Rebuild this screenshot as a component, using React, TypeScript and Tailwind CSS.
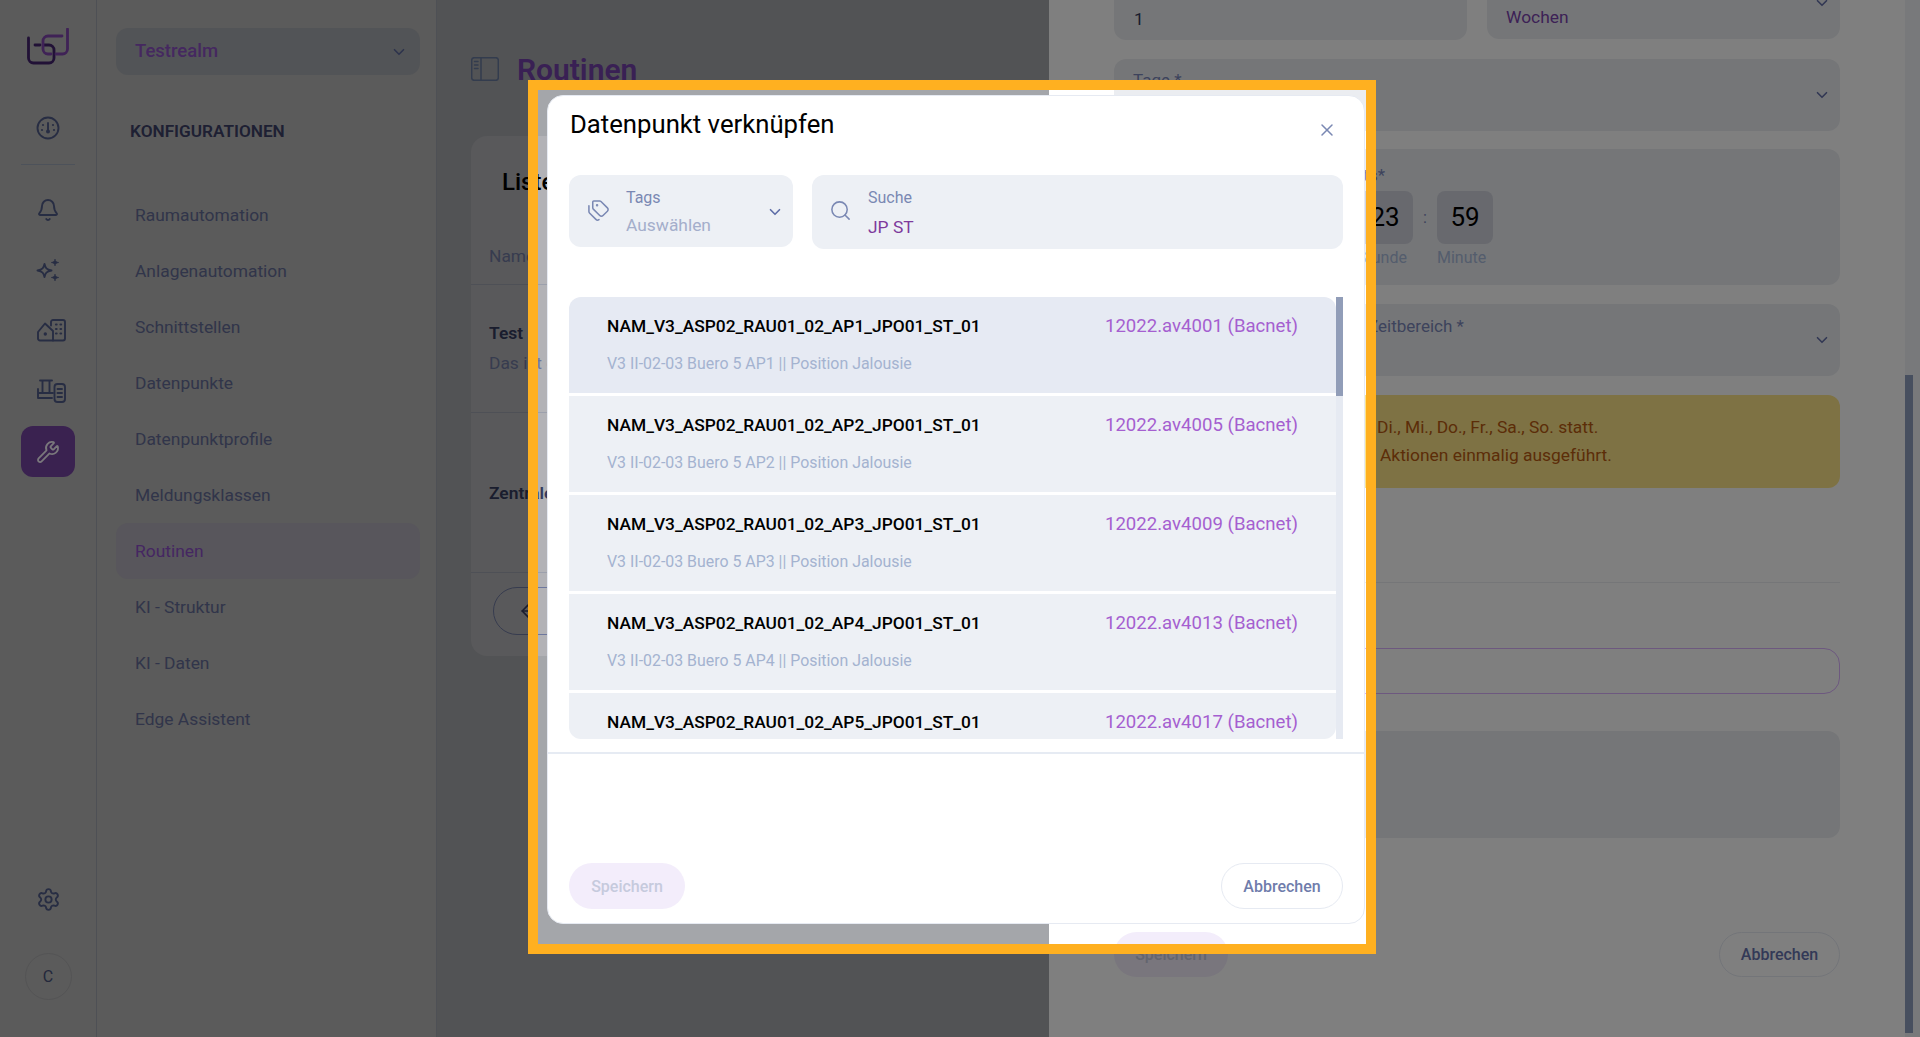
import React from 'react';
import { ArrowLeft, Bell, ChevronDown, Search, Settings, Tags, Wrench, X } from 'lucide-react';

const NAV = ['Raumautomation', 'Anlagenautomation', 'Schnittstellen', 'Datenpunkte', 'Datenpunktprofile', 'Meldungsklassen', 'Routinen', 'KI - Struktur', 'KI - Daten', 'Edge Assistent'];

const ROWS = [
  { ap: 'AP1', addr: '12022.av4001 (Bacnet)' },
  { ap: 'AP2', addr: '12022.av4005 (Bacnet)' },
  { ap: 'AP3', addr: '12022.av4009 (Bacnet)' },
  { ap: 'AP4', addr: '12022.av4013 (Bacnet)' },
  { ap: 'AP5', addr: '12022.av4017 (Bacnet)' },
];

const ICON = '#4f5a86';

const Logo = () => (
  <svg width="42" height="37" viewBox="27 28 42 37" fill="none" strokeWidth="2.8" strokeLinecap="round">
    <path d="M28.500 38V58a5 5 0 0 0 5 5H49a5 5 0 0 0 5-5V50a5 5 0 0 0-5-5H44M35 45H40" stroke="#42226c" />
    <path d="M67.500 29V49a5 5 0 0 1-5 5H56M62 36H48a5 5 0 0 0-5 5V49a5 5 0 0 0 5 5H51" stroke="#7e44ac" />
  </svg>
);

const GaugeIcon = () => (
  <svg width="24" height="24" viewBox="0 0 24 24" fill="none" stroke={ICON} strokeWidth="1.9" strokeLinecap="round">
    <circle cx="12" cy="12" r="10.500" />
    <path d="M12 14V7" />
    <circle cx="12" cy="15.500" r="2" fill={ICON} stroke="none" />
    <circle cx="7" cy="9" r="1.100" fill={ICON} stroke="none" />
    <circle cx="17" cy="9" r="1.100" fill={ICON} stroke="none" />
    <circle cx="6" cy="14" r="1.100" fill={ICON} stroke="none" />
    <circle cx="18" cy="14" r="1.100" fill={ICON} stroke="none" />
  </svg>
);

const SparkIcon = () => (
  <svg width="24" height="24" viewBox="0 0 24 24" fill="none" stroke={ICON} strokeWidth="1.900" strokeLinejoin="round">
    <path d="M8.500 6 C9.300 10 10.500 11.600 15.500 12.500 C10.500 13.400 9.300 15 8.500 19 C7.700 15 6.500 13.400 1.500 12.500 C6.500 11.600 7.700 10 8.500 6Z" />
    <path d="M19 1 C19.400 3.200 20.200 4 22.800 4.500 C20.200 5 19.400 5.800 19 8 C18.600 5.800 17.800 5 15.200 4.500 C17.800 4 18.600 3.200 19 1Z" fill={ICON} strokeWidth="0.600" />
    <path d="M19 16 C19.400 18.200 20.200 19 22.800 19.500 C20.200 20 19.400 20.800 19 23 C18.600 20.800 17.800 20 15.200 19.500 C17.800 19 18.600 18.200 19 16Z" fill={ICON} strokeWidth="0.600" />
  </svg>
);

const BuildingsIcon = () => (
  <svg width="29" height="23" viewBox="0 0 29 23" fill="none" stroke={ICON} strokeWidth="1.900" strokeLinejoin="round" strokeLinecap="round">
    <path d="M1 13L8 4.500L16 12V21.500H3a2 2 0 0 1-2-2Z" />
    <circle cx="8.300" cy="15" r="1.700" fill={ICON} stroke="none" />
    <path d="M14 6.500V3a2 2 0 0 1 2-2H26a2 2 0 0 1 2 2V19.500a2 2 0 0 1-2 2H16" />
    <path d="M19 5.500h.6M23.500 5.500h.6M19 10h.6M23.500 10h.6M19 14.500h.6M23.500 14.500h.6" strokeWidth="2.200" />
  </svg>
);

const FactoryIcon = () => (
  <svg width="29" height="24" viewBox="0 0 29 24" fill="none" stroke={ICON} strokeWidth="1.900" strokeLinecap="round" strokeLinejoin="round">
    <path d="M3 1.500H15M5.500 1.500V13.500M12.500 1.500V13.500" />
    <path d="M1 10V19H15M1 14H16" />
    <rect x="17.500" y="5" width="10.500" height="18" rx="3" />
    <path d="M20.500 10h4.500M20.500 14h4.500M20.500 18h4.500" />
  </svg>
);

const PanelIcon = () => (
  <svg width="28" height="24" viewBox="0 0 28 24" fill="none" stroke="#66789c" strokeWidth="1.500" strokeLinecap="round">
    <rect x="0.700" y="0.700" width="26.600" height="22.600" rx="2.500" />
    <path d="M10 1V23M3.500 4.500h3.500M3.500 8h3.500M3.500 11.500h3.500" />
  </svg>
);

export default function App() {
  return (
    <div className="relative flex h-screen w-screen overflow-hidden bg-[#a4a6aa] text-black [font-family:Roboto,sans-serif]">
      {/* icon rail */}
      <aside className="flex w-[97px] shrink-0 flex-col items-center border-r border-[#9da1aa] bg-[#b6b6b6] pt-[28px]">
        <Logo />
        <div className="mt-[51px]"><GaugeIcon /></div>
        <div className="mt-[24px] h-px w-[54px] bg-[#9aa4b4]" />
        <div className="mt-[15px] flex flex-col items-center">
          <div className="flex h-[60px] items-center"><Bell size={24} strokeWidth={1.9} className="text-[#4f5a86]" /></div>
          <div className="flex h-[60px] items-center"><SparkIcon /></div>
          <div className="flex h-[61px] items-center pl-[6px]"><BuildingsIcon /></div>
          <div className="flex h-[60px] items-center pl-[6px]"><FactoryIcon /></div>
          <div className="mt-[5px] flex h-[51px] w-[54px] items-center justify-center rounded-xl bg-[#7444a0]">
            <Wrench size={24} strokeWidth={1.8} className="text-[#f4f0f8]" />
          </div>
        </div>
        <Settings size={25} strokeWidth={1.8} className="mt-auto text-[#4f5a86]" />
        <div className="mb-[37px] mt-[41px] flex h-[47px] w-[47px] items-center justify-center rounded-full border border-[#a8a8aa] text-[16px] text-[#465078]">C</div>
      </aside>

      {/* config sidebar */}
      <aside className="w-[340px] shrink-0 border-r border-[#9da1aa] bg-[#b6b6b6] pl-[19px] pr-[16px] pt-[28px]">
        <div className="flex h-[47px] items-center justify-between rounded-xl bg-[#a5a9ae] pl-[19px] pr-[12px]">
          <span className="pt-[1px] text-[18.500px] font-medium text-[#8a50c0]">Testrealm</span>
          <ChevronDown size={18} strokeWidth={2.2} className="text-[#5a6698]" />
        </div>
        <div className="mt-[44px] pl-[14px] text-[17.200px] font-semibold leading-6 text-[#3c4066]">KONFIGURATIONEN</div>
        <nav className="mt-[44px] flex flex-col">
          {NAV.map((item) => (
            <div key={item} className={`flex h-[56px] items-center rounded-xl pl-[19px] text-[17.400px] ${item === 'Routinen' ? 'bg-[#b0acb8] text-[#8a4cc4]' : 'text-[#626a94]'}`}>
              {item}
            </div>
          ))}
        </nav>
      </aside>

      {/* main */}
      <main className="min-w-0 flex-1 pl-[34px] pt-[49px]">
        <div className="flex h-[40px] items-center gap-[18px]">
          <PanelIcon />
          <h1 className="text-[30px] font-semibold text-[#7240a8]">Routinen</h1>
        </div>
        <section className="mt-[47px] w-[560px] rounded-2xl bg-[#b2b2b6] pt-[30px]">
          <h2 className="pl-[31px] text-[24px] font-medium leading-8 text-black">Liste</h2>
          <div className="mt-[46px] border-b border-[#9ca0ac] pb-[16px] pl-[18px] text-[17.400px] leading-6 text-[#6e789e]">Name</div>
          <div className="border-b border-[#9ca0ac] pb-[37px] pl-[18px] pt-[36px] text-[17.400px] leading-6">
            <div className="font-semibold text-[#343a5c]">Test</div>
            <div className="mt-[6px] text-[#6e789e]">Das ist ein Test</div>
          </div>
          <div className="border-b border-[#9ca0ac] pb-[67px] pl-[18px] pt-[68px] text-[17.400px] font-semibold leading-6 text-[#343a5c]">Zentrale</div>
          <div className="pb-[21px] pl-[22px] pt-[14px]">
            <div className="flex h-[48px] w-[110px] items-center rounded-full border border-[#6e789e] pl-[24px]">
              <ArrowLeft size={20} className="text-[#343a5c]" />
            </div>
          </div>
        </section>
      </main>

      {/* drawer */}
      <div className="absolute bottom-0 left-[1049px] right-0 top-0 flex bg-white">
        <div className="min-w-0 flex-1 pl-[65px] pr-[65px]">
          <div className="-mt-[33px] flex gap-[20px]">
            <div className="flex h-[73px] w-[353px] flex-col justify-end rounded-xl bg-[#ebedf1] pb-[9px] pl-[20px] text-[17.400px] leading-6 text-[#343a5c]">1</div>
            <div className="flex h-[72px] flex-1 items-center justify-between rounded-xl bg-[#ebedf1] pl-[19px] pr-[9px]">
              <span className="mt-[28px] text-[17.400px] leading-6 text-[#7a42ac]">Wochen</span>
              <ChevronDown size={18} strokeWidth={2.2} className="text-[#6470a8]" />
            </div>
          </div>
          <div className="mt-[19px] flex h-[72px] justify-between rounded-xl bg-[#ebedf1] pl-[19px] pr-[9px] pt-[9px]">
            <span className="text-[17px] leading-6 text-[#7a86b8]">Tage *</span>
            <ChevronDown size={18} strokeWidth={2.2} className="mt-[18px] text-[#6470a8]" />
          </div>
          <div className="mt-[18px] h-[136px] rounded-xl bg-[#ebedf1] pt-[14px]">
            <div className="w-[271px] text-right text-[17px] leading-6 text-[#7a86b8]">Zeitpunkt des Starts*</div>
            <div className="mt-[4px] grid grid-cols-[56px_24px_56px] pl-[243px]">
              <div className="flex h-[53px] items-center justify-center rounded-lg bg-[#d0d3dd] text-[26px]">23</div>
              <div className="flex h-[53px] items-center justify-center text-[16px] text-[#7a86b8]">:</div>
              <div className="flex h-[53px] items-center justify-center rounded-lg bg-[#d0d3dd] text-[26px]">59</div>
              <div className="mt-[2px] text-[16px] leading-6 text-[#a8bada]">Stunde</div>
              <div />
              <div className="mt-[2px] text-[16px] leading-6 text-[#a8bada]">Minute</div>
            </div>
          </div>
          <div className="mt-[19px] flex h-[72px] justify-between rounded-xl bg-[#ebedf1] pl-[254px] pr-[9px] pt-[10px]">
            <span className="text-[17px] leading-6 text-[#7a86b8]">Zeitbereich *</span>
            <ChevronDown size={18} strokeWidth={2.2} className="mt-[17px] text-[#6470a8]" />
          </div>
          <div className="mt-[19px] h-[93px] rounded-xl bg-[#fce488] pt-[18px] text-[17.400px] leading-7 text-[#b85a10]">
            <div className="pl-[263px]">Di., Mi., Do., Fr., Sa., So. statt.</div>
            <div className="pl-[266px]">Aktionen einmalig ausgeführt.</div>
          </div>
          <div className="mt-[94px] border-t border-[#ebedf1]" />
          <div className="mt-[65px] h-[46px] rounded-2xl border border-[#dab0ff]" />
          <div className="mt-[37px] h-[107px] rounded-xl bg-[#ebedf1]" />
          <div className="mt-[94px] flex items-center justify-between">
            <button className="h-[45px] w-[114px] rounded-full bg-[#f3edfb] text-[16px] font-medium text-[#c6cadd]">Speichern</button>
            <button className="h-[45px] w-[121px] rounded-full border border-[#e6eaf2] text-[16px] font-medium text-[#6672ae]">Abbrechen</button>
          </div>
        </div>
        <div className="w-[15px] shrink-0 bg-[#f0f2f6] pt-[375px]">
          <div className="h-[658px] w-[8px] bg-[#8e9ebe]" />
        </div>
      </div>

      {/* highlight frame, dims everything around it */}
      <div className="absolute left-[528px] top-[80px] h-[874px] w-[848px] border-[10px] border-[#ffb020] shadow-[0_0_0_2000px_rgba(0,0,0,0.5)]" />

      {/* dialog */}
      <div className="absolute left-[547px] top-[95px] flex h-[829px] w-[818px] flex-col rounded-2xl border border-[#e6eaf2] bg-white">
        <div className="flex items-start justify-between pl-[22px] pr-[27px] pt-[12px]">
          <h2 className="text-[25.700px] leading-8 text-black">Datenpunkt verknüpfen</h2>
          <X size={20} strokeWidth={1.8} className="mt-[12px] text-[#7a88b3]" />
        </div>
        <div className="mt-[35px] flex items-start gap-[19px] pl-[21px]">
          <div className="flex h-[72px] w-[224px] items-center rounded-xl bg-[#edf0f5] pl-[18px] pr-[9px]">
            <Tags size={23} strokeWidth={1.600} className="-mt-[1px] text-[#7a88b3]" />
            <div className="ml-[16px] flex-1">
              <div className="pt-[1px] text-[16px] leading-6 text-[#7a88b3]">Tags</div>
              <div className="mt-[3px] text-[17.400px] leading-6 text-[#a4aecb]">Auswählen</div>
            </div>
            <ChevronDown size={18} strokeWidth={2.2} className="mt-[1px] text-[#5f6ea8]" />
          </div>
          <div className="flex h-[74px] w-[531px] items-center rounded-xl bg-[#edf0f5] pl-[17px]">
            <Search size={23} strokeWidth={1.600} className="-mt-[3px] text-[#7a88b3]" />
            <div className="ml-[16px]">
              <div className="pt-[1px] text-[16px] leading-6 text-[#7a88b3]">Suche</div>
              <div className="mt-[5px] text-[17.400px] leading-6 text-[#7e3a9c]">JP ST</div>
            </div>
          </div>
        </div>
        <div className="ml-[21px] mt-[48px] flex h-[442px] w-[774px] overflow-hidden">
          <div className="flex min-w-0 flex-1 flex-col gap-[3px] overflow-hidden rounded-xl">
            {ROWS.map((row, i) => (
              <div key={row.ap} className={`flex h-[96px] shrink-0 items-start justify-between pl-[38px] pr-[38px] pt-[17px] ${i === 0 ? 'bg-[#e6eaf3]' : 'bg-[#edf0f5]'}`}>
                <div>
                  <div className="text-[17.350px] font-medium leading-6 text-black">{`NAM_V3_ASP02_RAU01_02_${row.ap}_JPO01_ST_01`}</div>
                  {i < 4 && <div className="mt-[14px] text-[15.900px] leading-6 text-[#a4b3d0]">{`V3 II-02-03 Buero 5 ${row.ap} || Position Jalousie`}</div>}
                </div>
                <div className="text-[18.600px] leading-6 text-[#a55fd0]">{row.addr}</div>
              </div>
            ))}
          </div>
          <div className="w-[7px] shrink-0 bg-[#e6eaf2]">
            <div className="h-[99px] bg-[#919db8]" />
          </div>
        </div>
        <div className="mt-[13px] border-t-2 border-[#e6ebf3]" />
        <div className="mt-auto flex items-center justify-between pb-[14px] pl-[21px] pr-[21px]">
          <button className="h-[46px] w-[116px] rounded-full bg-[#f3edfb] pt-[1px] text-[16px] font-medium text-[#c6cadd]">Speichern</button>
          <button className="h-[46px] w-[122px] rounded-full border border-[#e6eaf2] pt-[1px] text-[16px] font-medium text-[#6f7cab]">Abbrechen</button>
        </div>
      </div>
    </div>
  );
}
